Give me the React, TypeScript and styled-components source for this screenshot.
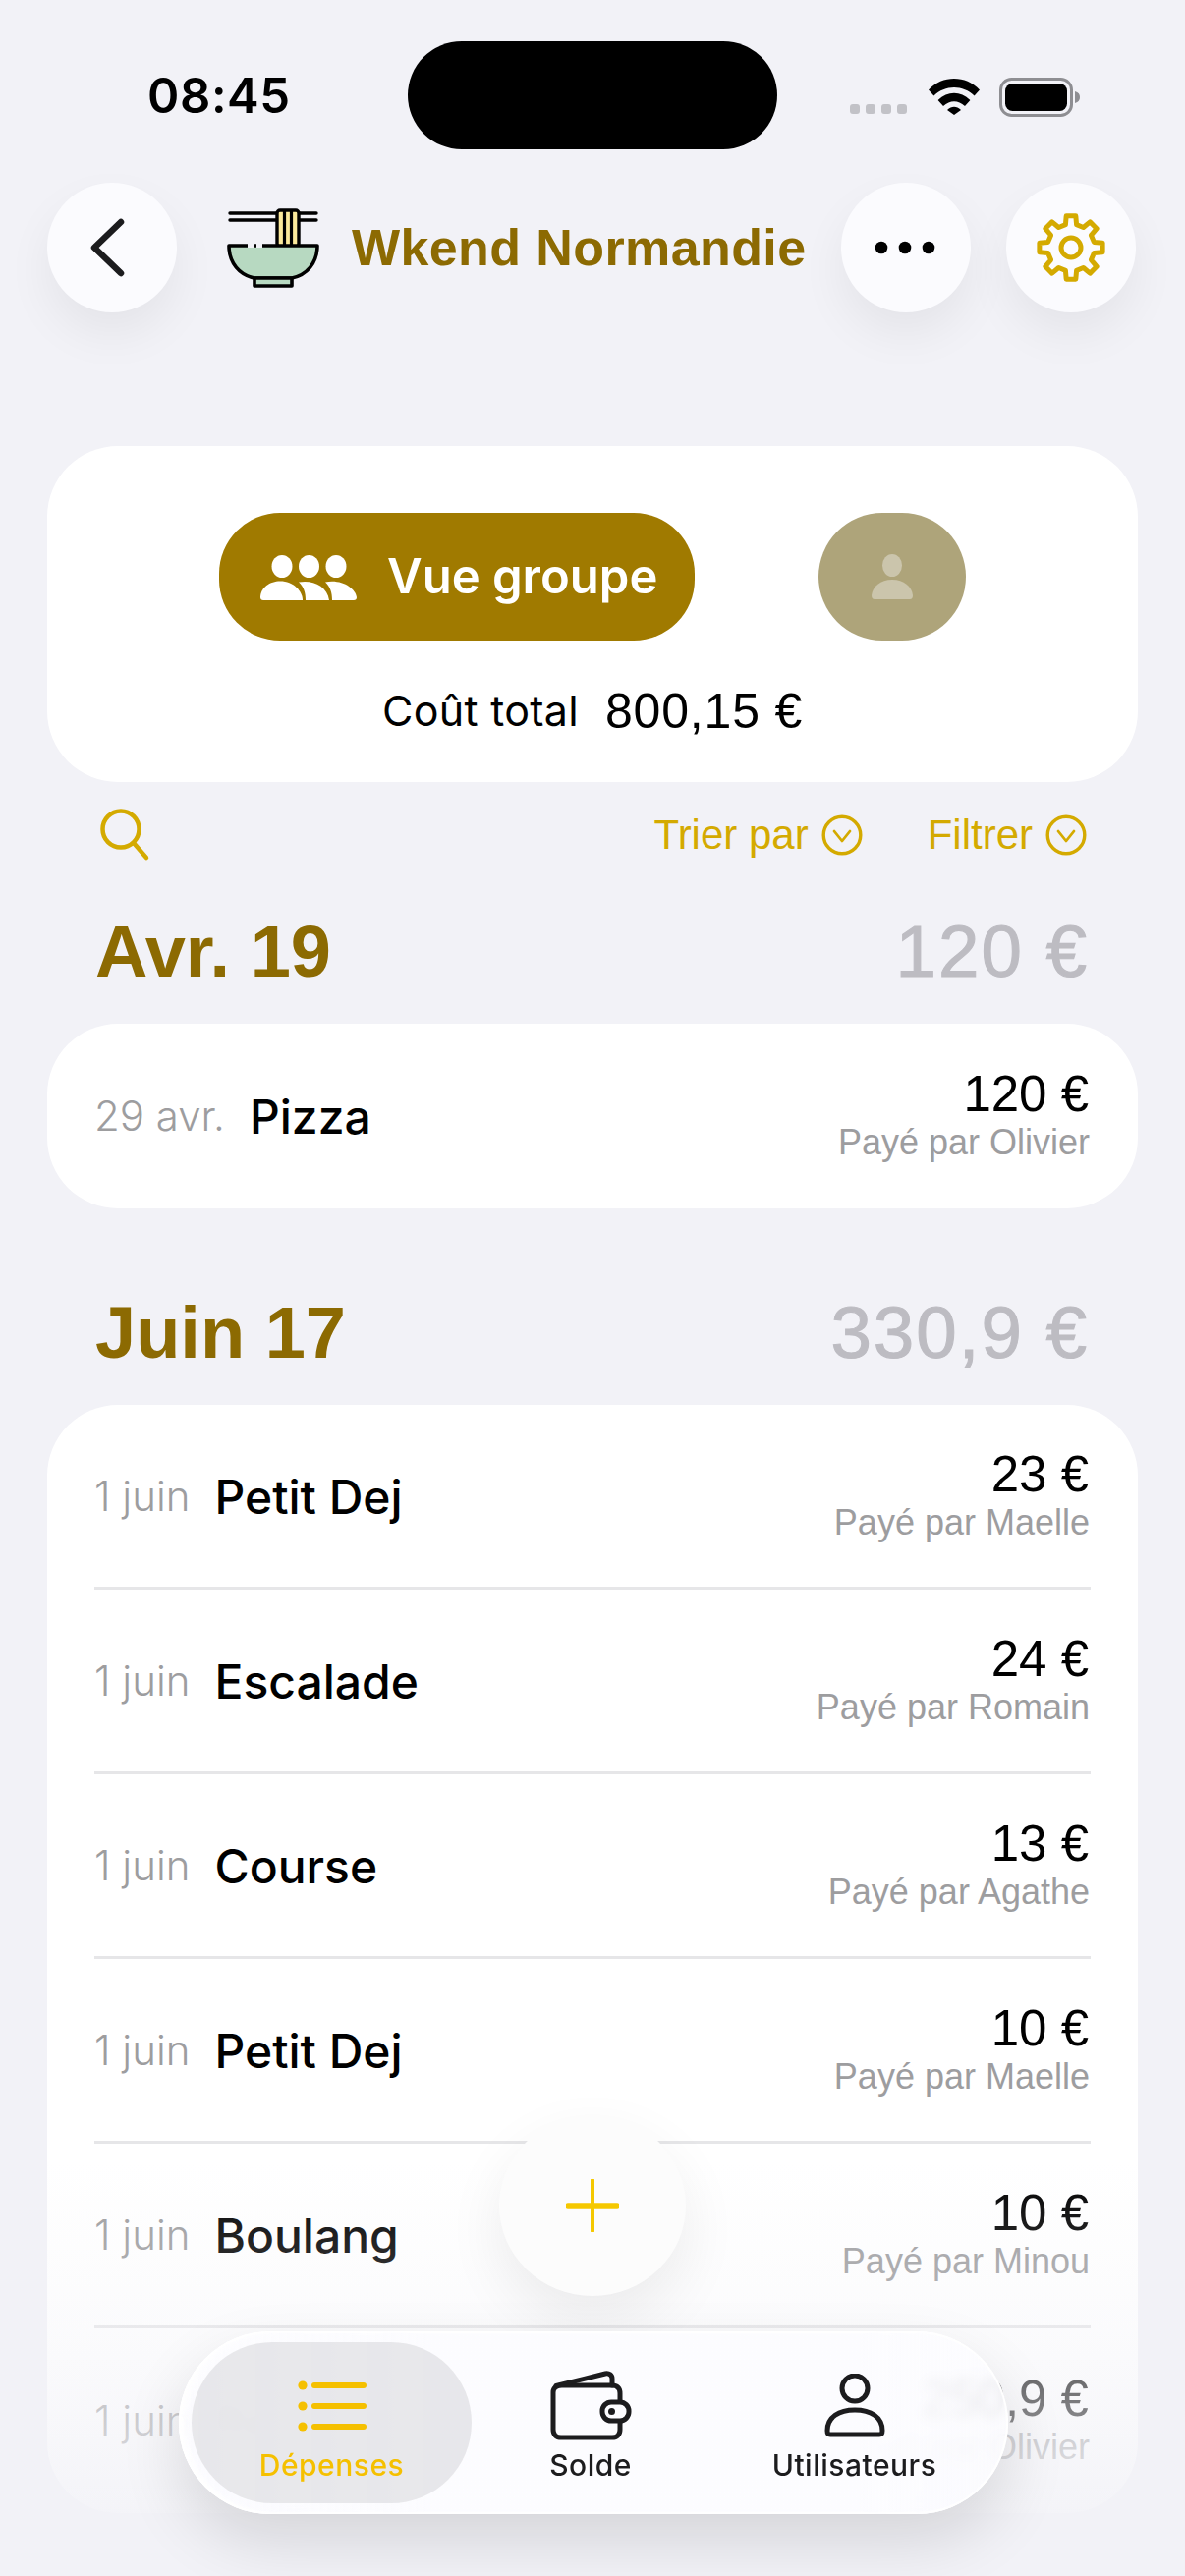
import React from "react";
import styled, { createGlobalStyle } from "styled-components";

const helvetica = `"Liberation Sans", Arial, sans-serif`;
const inter = `Inter, "Noto Sans", sans-serif`;

const Global = createGlobalStyle`
  html, body { margin: 0; padding: 0; background: #f2f2f7; }
  * { box-sizing: border-box; }
`;

const Page = styled.div`
  position: relative;
  width: 1206px;
  height: 2622px;
  overflow: hidden;
  background: #f2f2f7;
  font-family: ${helvetica};
`;
const StatusBar = styled.div`
  display: grid;
  grid-template-columns: 415px 376px 1fr;
  height: 152px;
  padding-top: 42px;
`;
const Time = styled.div`
  font: 600 49px/112px ${inter};
  color: #000;
  padding-left: 150px;
  height: 110px;
  letter-spacing: 0.6px;
`;
const Island = styled.div`
  height: 110px;
  background: #000;
  border-radius: 55px;
`;
const StatusIcons = styled.div`
  display: flex;
  align-items: flex-start;
  padding: 37px 0 0 74px;
`;
const CellDots = styled.div`
  display: flex;
  gap: 6px;
  margin-top: 27px;
  margin-right: 22px;
`;
const CellDot = styled.span`
  width: 10px;
  height: 10px;
  border-radius: 3px;
  background: #c2c2c7;
`;
const Header = styled.div`
  display: flex;
  align-items: center;
  padding: 0 48px;
  margin-top: 34px;
`;
const RoundButton = styled.div<{ $gap?: number }>`
  width: 132px;
  height: 132px;
  flex: none;
  border-radius: 50%;
  background: #fbfbfe;
  display: flex;
  align-items: center;
  justify-content: center;
  margin-left: ${(p) => p.$gap ?? 0}px;
  box-shadow: 0 22px 48px rgba(0, 0, 0, 0.06);
`;
const Title = styled.div`
  font: 700 52px/60px ${helvetica};
  color: #8c6a02;
  margin-left: 32px;
  letter-spacing: 0.4px;
  white-space: nowrap;
  width: 460px;
`;
const BowlSvg = styled.svg`
  margin-left: 50px;
  flex: none;
`;
const SummaryCard = styled.section`
  margin: 136px 48px 0;
  height: 342px;
  background: #fff;
  border-radius: 72px;
  padding-top: 68px;
`;
const ViewSwitch = styled.div`
  display: flex;
  justify-content: center;
  gap: 126px;
`;
const GroupPill = styled.div`
  width: 484px;
  height: 130px;
  background: #a07a00;
  border-radius: 62px;
  display: flex;
  align-items: center;
  padding-left: 42px;
  gap: 31px;
  color: #fff;
  font: 600 49px/62px ${inter};
`;
const SoloPill = styled.div`
  width: 150px;
  height: 130px;
  background: #aea47a;
  border-radius: 65px;
  display: flex;
  align-items: center;
  justify-content: center;
`;
const TotalRow = styled.div`
  display: flex;
  justify-content: center;
  align-items: center;
  gap: 27px;
  margin-top: 45px;
`;
const TotalLabel = styled.span`
  font: 400 43px/50px ${inter};
  letter-spacing: 0.3px;
  color: #000;
`;
const TotalValue = styled.span`
  font: 400 50px/50px ${helvetica};
  color: #000;
  letter-spacing: 0.8px;
  padding-top: 2px;
`;
const Tools = styled.div`
  display: flex;
  align-items: center;
  height: 88px;
  padding: 0 100px 0 102px;
  margin-top: 10px;
  color: #d4aa00;
`;
const ToolLabel = styled.span<{ $gap: number }>`
  font: 400 42px/50px ${helvetica};
  margin-left: ${(p) => p.$gap}px;
`;
const ChevronSvg = styled.svg`
  margin-left: 13px;
  flex: none;
`;
const SearchSvg = styled.svg`
  flex: none;
  margin-right: auto;
`;
const MonthHead = styled.div<{ $top: number }>`
  display: flex;
  justify-content: space-between;
  align-items: center;
  margin-top: ${(p) => p.$top}px;
  padding: 0 98px 0 97px;
  height: 90px;
`;
const Month = styled.span`
  font: 700 74px/90px ${helvetica};
  color: #8c6a02;
`;
const MonthTotal = styled.span`
  font: 400 74.5px/90px ${helvetica};
  color: #bdbcc2;
  -webkit-text-stroke: 1.1px #bdbcc2;
  letter-spacing: 2px;
`;
const ListCard = styled.section<{ $top: number }>`
  margin: ${(p) => p.$top}px 48px 0;
  background: #fff;
  border-radius: 72px;
  padding: 0 48px;
`;
const Row = styled.div`
  display: flex;
  align-items: center;
  height: 188px;
  border-bottom: 3px solid #e6e6e8;
  &:last-child {
    border-bottom: 0;
  }
`;
const DateText = styled.span`
  font: 300 42px/50px ${inter};
  color: #9d9d9f;
  margin-right: 25px;
  white-space: nowrap;
`;
const Name = styled.span`
  font: 500 48px/54px ${inter};
  color: #000;
  margin-top: 2px;
`;
const RowEnd = styled.div`
  margin-left: auto;
  margin-top: 2px;
  text-align: right;
  display: flex;
  flex-direction: column;
`;
const Amount = styled.span`
  font: 400 51px/52px ${helvetica};
  color: #000;
  padding-right: 2px;
`;
const Payer = styled.span`
  font: 400 36px/46px ${helvetica};
  color: #9d9d9f;
  padding-right: 1px;
`;
const Fade = styled.div`
  position: absolute;
  left: 0;
  right: 0;
  bottom: 0;
  height: 420px;
  background: linear-gradient(
    to bottom,
    rgba(242, 242, 247, 0) 0%,
    rgba(242, 242, 247, 0.3) 40%,
    rgba(242, 242, 247, 0.6) 66%,
    rgba(242, 242, 247, 0.88) 85%,
    rgba(242, 242, 247, 1) 100%
  );
`;
const AddButton = styled.div`
  position: absolute;
  left: 508px;
  top: 2153px;
  width: 190px;
  height: 184px;
  border-radius: 50%;
  background: #fcfcfc;
  display: flex;
  align-items: center;
  justify-content: center;
  box-shadow: 0 24px 60px rgba(0, 0, 0, 0.07);
`;
const Nav = styled.nav`
  position: absolute;
  left: 182px;
  top: 2373px;
  width: 844px;
  height: 186px;
  border-radius: 93px;
  background: linear-gradient(
    to right,
    rgba(252, 252, 255, 0.86) 0%,
    rgba(252, 252, 255, 0.98) 30%,
    rgba(252, 252, 255, 0.98) 82%,
    rgba(252, 252, 255, 0.82) 100%
  );
  backdrop-filter: blur(6px);
  box-shadow: 0 28px 64px rgba(0, 0, 0, 0.12), inset 0 0 0 2px rgba(255, 255, 255, 0.9),
    inset 6px 0 5px rgba(255, 255, 255, 0.85);
  display: grid;
  grid-template-columns: 307px 224px 313px;
  padding: 11px 0;
`;
const Tab = styled.div<{ $active?: boolean }>`
  display: flex;
  flex-direction: column;
  align-items: center;
  margin-left: ${(p) => (p.$active ? "13px" : "0")};
  width: ${(p) => (p.$active ? "285px" : "auto")};
  border-radius: 82px;
  background: ${(p) => (p.$active ? "rgba(228, 228, 232, 0.86)" : "transparent")};
  padding-top: 30px;
`;
const TabIconBox = styled.div`
  height: 70px;
  display: flex;
  align-items: center;
  justify-content: center;
`;
const TabLabel = styled.span<{ $active?: boolean }>`
  font: 500 30px/36px ${inter};
  color: ${(p) => (p.$active ? "#f5c000" : "#1c1c1e")};
  letter-spacing: 0.5px;
  margin-top: 7px;
`;

/* ---------- drawings ---------- */
function gearPath(cx: number, cy: number, rOut: number, rIn: number, teeth: number) {
  const pts: string[] = [];
  const step = (Math.PI * 2) / teeth;
  for (let i = 0; i < teeth; i++) {
    const a = i * step - Math.PI / 2;
    const spec: [number, number][] = [
      [rIn, a - step * 0.3],
      [rOut, a - step * 0.19],
      [rOut, a + step * 0.19],
      [rIn, a + step * 0.3],
    ];
    spec.forEach(([r, t]) => pts.push(`${(cx + r * Math.cos(t)).toFixed(2)} ${(cy + r * Math.sin(t)).toFixed(2)}`));
  }
  return `M${pts.join("L")}Z`;
}

const Wifi = () => (
  <svg width="52" height="38" viewBox="0 0 52 38" style={{ flex: "none" }}>
    <path d="M0 12.5C14-2.8 38-2.8 52 12.5L46.6 18.6C35.2 7.2 16.8 7.2 5.4 18.6Z" fill="#000" />
    <path d="M9.6 23C19.6 13.4 32.4 13.4 42.4 23L37 29C30 22.6 22 22.6 15 29Z" fill="#000" />
    <path d="M19 33C23.6 28.8 28.4 28.8 33 33L26 38Z" fill="#000" />
  </svg>
);
const Battery = () => (
  <svg width="84" height="40" viewBox="0 0 84 40" style={{ marginLeft: 20, flex: "none" }}>
    <rect x="1.5" y="1.5" width="72" height="37" rx="11" fill="none" stroke="#8e8e92" strokeWidth="3" />
    <rect x="6" y="6" width="63" height="28" rx="7.5" fill="#000" />
    <path d="M77 14c3.6 1 5 3.2 5 6s-1.4 5-5 6z" fill="#8e8e92" />
  </svg>
);
const Bowl = () => (
  <BowlSvg width="96" height="84" viewBox="230 210 96 84">
    <path d="M234 217H281M234 224H281M305 217H322M305 224H322" stroke="#000" strokeWidth="3.4" strokeLinecap="round" fill="none" />
    <rect x="282" y="214" width="22" height="37" rx="3" fill="#fbe99b" stroke="#000" strokeWidth="3.4" />
    <path d="M289.5 214V250M296.5 214V250" stroke="#000" strokeWidth="3.2" />
    <path d="M233 250H323C323 268 312 280 297 283H259C244 280 233 268 233 250Z" fill="#b7d9c1" stroke="#000" strokeWidth="3.6" strokeLinejoin="round" />
    <path d="M259 283H297V291H259Z" fill="#b7d9c1" stroke="#000" strokeWidth="3.6" strokeLinejoin="round" />
    <path d="M252 250H258M261 250H267" stroke="#f2f2f7" strokeWidth="4" />
  </BowlSvg>
);
const Back = () => (
  <svg width="40" height="60" viewBox="0 0 40 60" style={{ marginRight: 8 }}>
    <path d="M33 4L6 30L33 56" fill="none" stroke="#1c1c1e" strokeWidth="6.5" strokeLinecap="round" strokeLinejoin="round" />
  </svg>
);
const More = () => (
  <svg width="64" height="14" viewBox="0 0 64 14">
    <circle cx="7" cy="7" r="6.3" fill="#000" />
    <circle cx="31" cy="7" r="6.3" fill="#000" />
    <circle cx="55" cy="7" r="6.3" fill="#000" />
  </svg>
);
const Gear = () => (
  <svg width="72" height="72" viewBox="0 0 72 72">
    <path d={gearPath(36, 36, 32.5, 24, 8)} fill="none" stroke="#d4aa00" strokeWidth="5" strokeLinejoin="round" />
    <circle cx="36" cy="36" r="10" fill="none" stroke="#d4aa00" strokeWidth="5" />
  </svg>
);
const Group = () => (
  <svg width="98" height="50" viewBox="265 560 98 50" style={{ flex: "none" }}>
    <g fill="#fff">
      <ellipse cx="287" cy="574.5" rx="10.5" ry="11.5" />
      <ellipse cx="314.5" cy="574.5" rx="10.5" ry="11.5" />
      <ellipse cx="342" cy="574.5" rx="10.5" ry="11.5" />
      <path d="M265 606C265 596 275 589.5 285 589.5C299 589.5 308 600 308 609H268C266 609 265 608 265 606Z" />
      <path d="M304 590.5C318 588 333 594 335 609H311C311 601 309 595 304 590.5Z" />
      <path d="M331 590.5C348 587 362 597 363 606C363 608 362 609 360 609H338C338 601 336 595 331 590.5Z" />
    </g>
  </svg>
);
const Solo = () => (
  <svg width="44" height="46" viewBox="0 0 44 46">
    <g fill="#cbc5ac">
      <ellipse cx="22" cy="11.5" rx="10" ry="11.5" />
      <path d="M1 42C2 33 10 26 22 26S42 33 43 42C43 44.5 42 46 40 46H4C2 46 1 44.5 1 42Z" />
    </g>
  </svg>
);
const Search = () => (
  <SearchSvg width="52" height="54" viewBox="0 0 52 54">
    <circle cx="21" cy="21" r="18.5" fill="none" stroke="#d4aa00" strokeWidth="4.5" />
    <path d="M34 35L47 50" stroke="#d4aa00" strokeWidth="4.5" strokeLinecap="round" />
  </SearchSvg>
);
const Chevron = () => (
  <ChevronSvg width="42" height="42" viewBox="0 0 42 42">
    <circle cx="21" cy="21" r="18.8" fill="none" stroke="#d4aa00" strokeWidth="3.4" />
    <path d="M13 17L21 27L29 17" fill="none" stroke="#d4aa00" strokeWidth="2.8" strokeLinecap="round" strokeLinejoin="round" />
  </ChevronSvg>
);
const Plus = () => (
  <svg width="54" height="54" viewBox="0 0 54 54">
    <path d="M27 1V53" stroke="#f5c800" strokeWidth="4" strokeLinecap="round" />
    <path d="M2 27H52" stroke="#f5c800" strokeWidth="5.5" strokeLinecap="round" />
  </svg>
);
const ListIcon = () => (
  <svg width="70" height="52" viewBox="0 0 70 52">
    <g fill="#f5c000">
      <circle cx="5" cy="5" r="4.6" />
      <circle cx="5" cy="26" r="4.6" />
      <circle cx="5" cy="47" r="4.6" />
    </g>
    <path d="M17 5H67M17 26H67M17 47H67" stroke="#f5c000" strokeWidth="6" strokeLinecap="round" />
  </svg>
);
const WalletIcon = () => (
  <svg width="84" height="72" viewBox="0 0 84 72">
    <path d="M4 22C4 17 8 15 13 15H64C69 15 72 18 72 23V60C72 65 69 68 64 68H12C7 68 4 65 4 60Z" fill="none" stroke="#1c1c1e" strokeWidth="5" strokeLinejoin="round" />
    <path d="M7 15.5L57 3C61 2.2 64 4.5 64 8V15" fill="none" stroke="#1c1c1e" strokeWidth="5" strokeLinejoin="round" strokeLinecap="round" />
    <rect x="54" y="32" width="27" height="19" rx="9" fill="#fcfcff" stroke="#1c1c1e" strokeWidth="5" />
    <circle cx="63.5" cy="41.5" r="3.5" fill="#1c1c1e" />
  </svg>
);
const UserIcon = () => (
  <svg width="64" height="66" viewBox="0 0 64 66">
    <ellipse cx="32" cy="15" rx="13" ry="13" fill="none" stroke="#1c1c1e" strokeWidth="5" />
    <path d="M4 58C4 44 16 37 32 37S60 44 60 58C60 61 59 62 57 62H7C5 62 4 61 4 58Z" fill="none" stroke="#1c1c1e" strokeWidth="5" strokeLinejoin="round" />
  </svg>
);

const june = [
  { name: "Petit Dej", amount: "23 €", by: "Maelle" },
  { name: "Escalade", amount: "24 €", by: "Romain" },
  { name: "Course", amount: "13 €", by: "Agathe" },
  { name: "Petit Dej", amount: "10 €", by: "Maelle" },
  { name: "Boulang", amount: "10 €", by: "Minou" },
  { name: "Resto", amount: "250,9 €", by: "Olivier" },
];

export default function App() {
  return (
    <Page>
      <Global />
      <StatusBar>
        <Time>08:45</Time>
        <Island />
        <StatusIcons>
          <CellDots>
            <CellDot />
            <CellDot />
            <CellDot />
            <CellDot />
          </CellDots>
          <Wifi />
          <Battery />
        </StatusIcons>
      </StatusBar>
      <Header>
        <RoundButton>
          <Back />
        </RoundButton>
        <Bowl />
        <Title>Wkend Normandie</Title>
        <RoundButton $gap={38}>
          <More />
        </RoundButton>
        <RoundButton $gap={36}>
          <Gear />
        </RoundButton>
      </Header>
      <SummaryCard>
        <ViewSwitch>
          <GroupPill>
            <Group />
            <span>Vue groupe</span>
          </GroupPill>
          <SoloPill>
            <Solo />
          </SoloPill>
        </ViewSwitch>
        <TotalRow>
          <TotalLabel>Coût total</TotalLabel>
          <TotalValue>800,15 €</TotalValue>
        </TotalRow>
      </SummaryCard>
      <Tools>
        <Search />
        <ToolLabel $gap={0}>Trier par</ToolLabel>
        <Chevron />
        <ToolLabel $gap={66}>Filtrer</ToolLabel>
        <Chevron />
      </Tools>
      <MonthHead $top={30}>
        <Month>Avr. 19</Month>
        <MonthTotal>120 €</MonthTotal>
      </MonthHead>
      <ListCard $top={28}>
        <Row>
          <DateText>29 avr.</DateText>
          <Name>Pizza</Name>
          <RowEnd>
            <Amount>120 €</Amount>
            <Payer>Payé par Olivier</Payer>
          </RowEnd>
        </Row>
      </ListCard>
      <MonthHead $top={82}>
        <Month>Juin 17</Month>
        <MonthTotal>330,9 €</MonthTotal>
      </MonthHead>
      <ListCard $top={28}>
        {june.map((r, i) => (
          <Row key={i}>
            <DateText>1 juin</DateText>
            <Name>{r.name}</Name>
            <RowEnd>
              <Amount>{r.amount}</Amount>
              <Payer>Payé par {r.by}</Payer>
            </RowEnd>
          </Row>
        ))}
      </ListCard>
      <Fade />
      <AddButton>
        <Plus />
      </AddButton>
      <Nav>
        <Tab $active>
          <TabIconBox>
            <ListIcon />
          </TabIconBox>
          <TabLabel $active>Dépenses</TabLabel>
        </Tab>
        <Tab>
          <TabIconBox>
            <WalletIcon />
          </TabIconBox>
          <TabLabel>Solde</TabLabel>
        </Tab>
        <Tab>
          <TabIconBox>
            <UserIcon />
          </TabIconBox>
          <TabLabel>Utilisateurs</TabLabel>
        </Tab>
      </Nav>
    </Page>
  );
}
